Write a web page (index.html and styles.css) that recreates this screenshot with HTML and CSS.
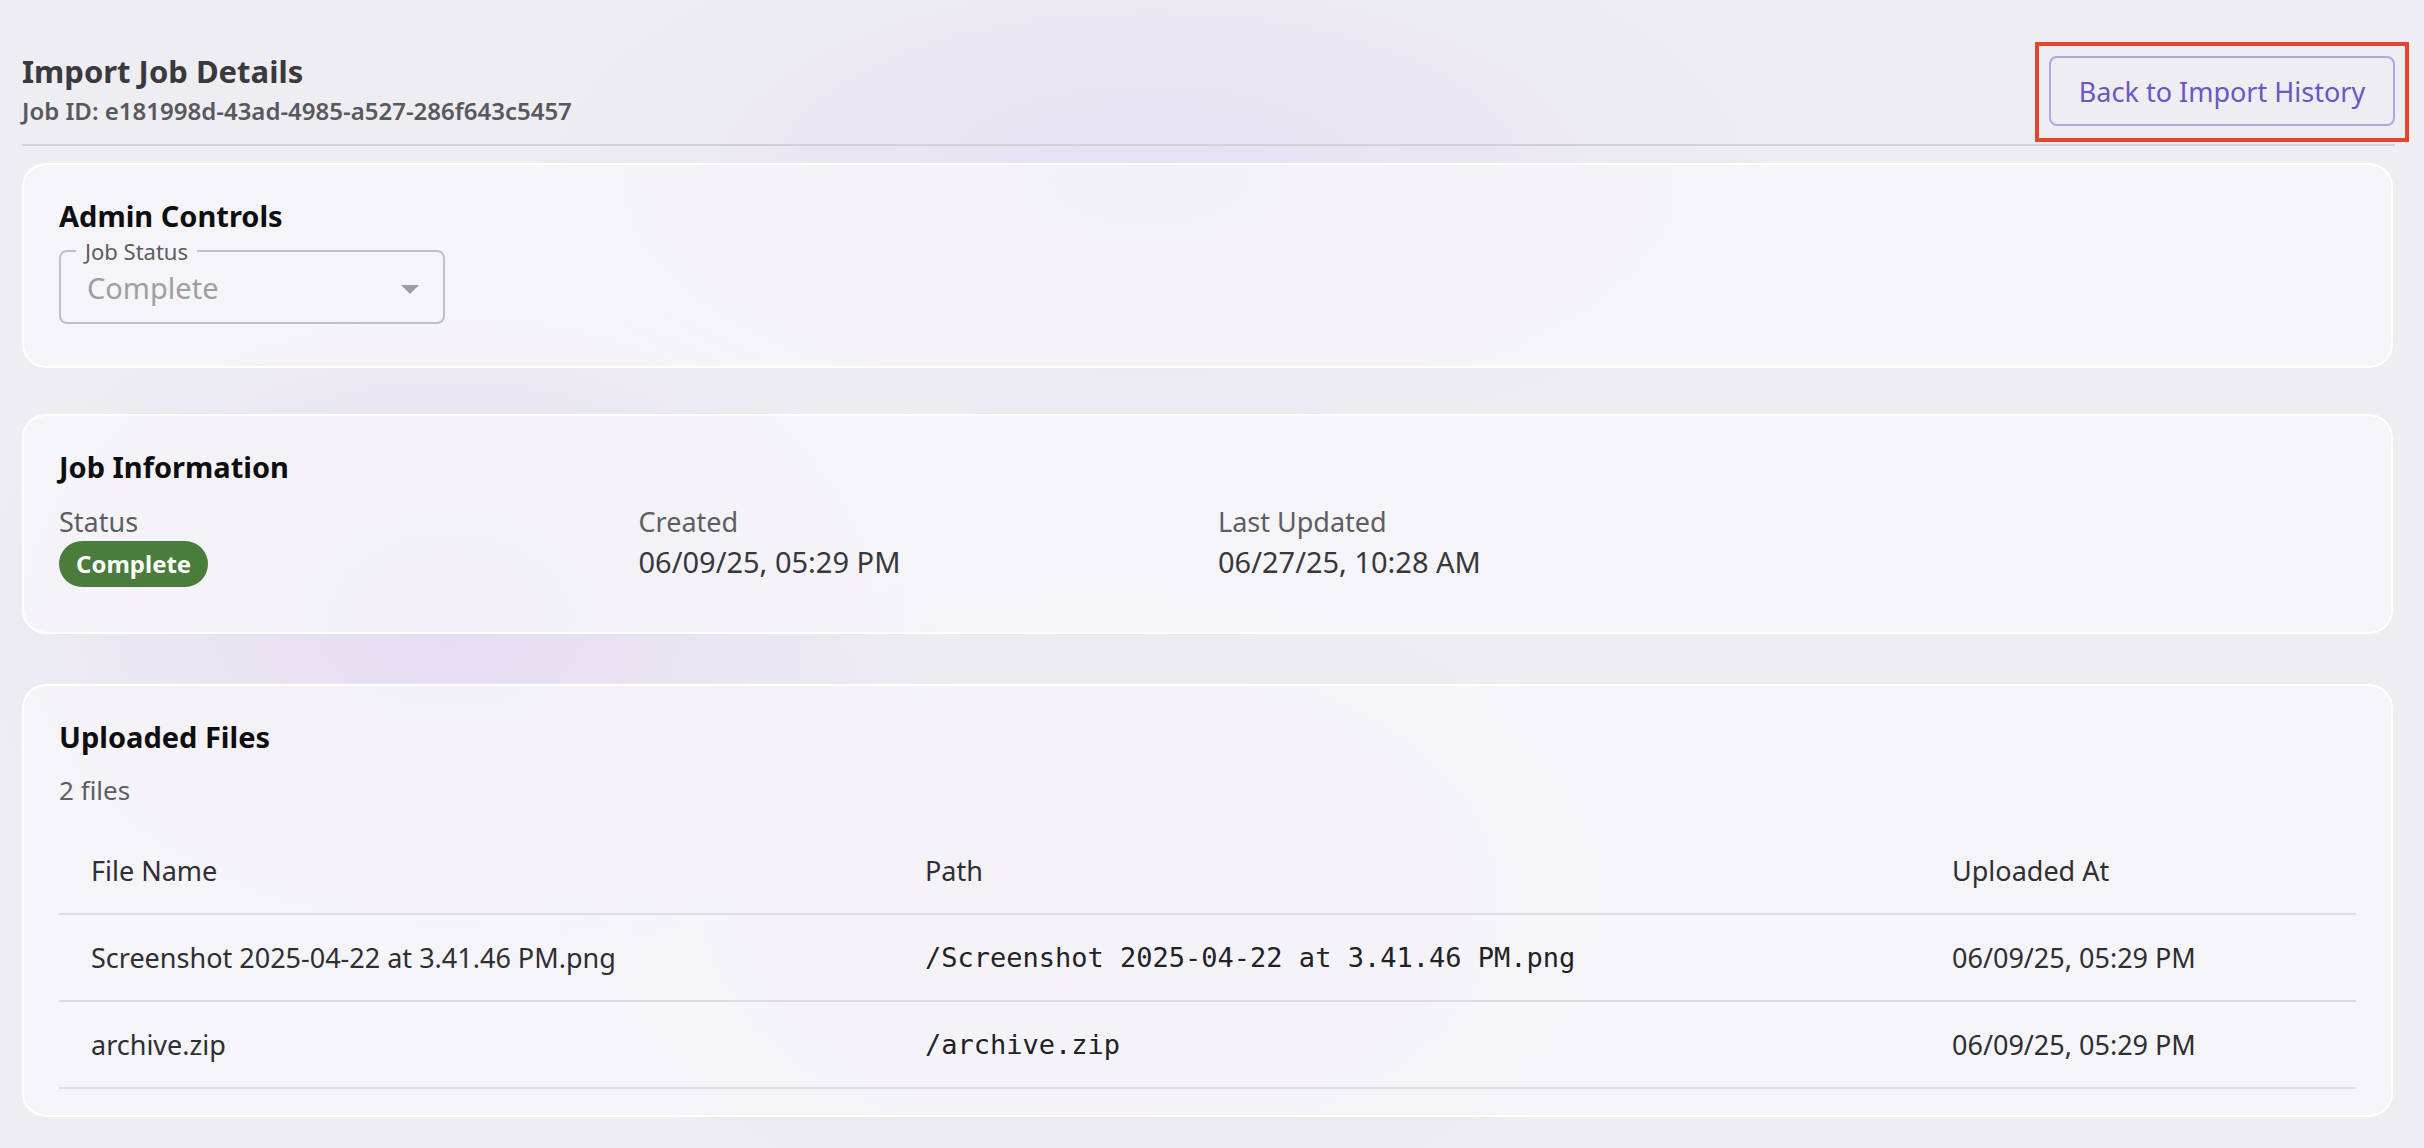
FILE: index.html
```html
<!DOCTYPE html>
<html lang="en">
<head>
<meta charset="utf-8">
<title>Import Job Details</title>
<link rel="stylesheet" href="styles.css">
</head>
<body>
<div class="page">
  <header class="page-header">
    <div class="title-block">
      <h1 class="title">Import Job Details</h1>
      <div class="job-id">Job ID: e181998d-43ad-4985-a527-286f643c5457</div>
    </div>
    <div class="btn-wrap">
      <button class="back-btn" type="button">Back to Import History</button>
      <span class="highlight"></span>
    </div>
  </header>

  <section class="card card-admin">
    <h2 class="card-title">Admin Controls</h2>
    <fieldset class="select">
      <legend class="select-label">Job Status</legend>
      <div class="select-value">
        <span>Complete</span>
        <svg class="caret" width="18" height="9" viewBox="0 0 18 9"><path d="M0 0 L18 0 L9 9 Z" fill="#9d9ca2"/></svg>
      </div>
    </fieldset>
  </section>

  <section class="card card-info">
    <h2 class="card-title">Job Information</h2>
    <div class="info-grid">
      <div class="info-item">
        <div class="info-label">Status</div>
        <span class="badge">Complete</span>
      </div>
      <div class="info-item">
        <div class="info-label">Created</div>
        <div class="info-value">06/09/25, 05:29 PM</div>
      </div>
      <div class="info-item">
        <div class="info-label">Last Updated</div>
        <div class="info-value">06/27/25, 10:28 AM</div>
      </div>
      <div class="info-item"></div>
    </div>
  </section>

  <section class="card card-files">
    <h2 class="card-title">Uploaded Files</h2>
    <div class="file-count">2 files</div>
    <table class="files">
      <colgroup>
        <col class="c1"><col class="c2"><col class="c3">
      </colgroup>
      <thead>
        <tr><th>File Name</th><th>Path</th><th>Uploaded At</th></tr>
      </thead>
      <tbody>
        <tr>
          <td>Screenshot 2025-04-22 at 3.41.46 PM.png</td>
          <td class="mono">/Screenshot 2025-04-22 at 3.41.46 PM.png</td>
          <td>06/09/25, 05:29 PM</td>
        </tr>
        <tr>
          <td>archive.zip</td>
          <td class="mono">/archive.zip</td>
          <td>06/09/25, 05:29 PM</td>
        </tr>
      </tbody>
    </table>
  </section>
</div>
</body>
</html>
```

FILE: styles.css
```css
* { box-sizing: border-box; }

html, body {
  margin: 0;
  padding: 0;
  height: 100%;
}

body {
  font-family: "Noto Sans", "Open Sans", sans-serif;
  color: #333238;
  background:
    radial-gradient(ellipse 700px 500px at 450px 620px, rgba(226, 214, 242, 0.75), rgba(226, 214, 242, 0) 70%),
    radial-gradient(ellipse 900px 400px at 1150px 180px, rgba(228, 220, 242, 0.8), rgba(228, 220, 242, 0) 70%),
    radial-gradient(ellipse 800px 500px at 1100px 900px, rgba(232, 224, 240, 0.6), rgba(232, 224, 240, 0) 70%),
    #eeedf2;
  overflow: hidden;
}

.page {
  padding: 0 29px 0 22px;
}

.page-header {
  display: flex;
  justify-content: space-between;
  align-items: flex-end;
  padding: 51px 0 18px;
  border-bottom: 2px solid #d2d0d8;
}

.title {
  margin: 0;
  font-size: 31px;
  line-height: 40px;
  font-weight: 700;
  color: #3a393e;
}

.job-id {
  font-size: 24px;
  line-height: 30px;
  font-weight: 600;
  color: #59585e;
  margin-top: 5px;
}

.btn-wrap {
  position: relative;
}

.back-btn {
  display: block;
  width: 346px;
  height: 70px;
  padding: 0;
  font-family: "Noto Sans", "Open Sans", sans-serif;
  font-size: 27px;
  color: #6a56c7;
  background: transparent;
  border: 2px solid #b0a6e4;
  border-radius: 8px;
}

.highlight {
  position: absolute;
  left: -14px;
  right: -14px;
  top: -14px;
  bottom: -16px;
  border: 4px solid #e8432c;
  pointer-events: none;
}

.card {
  background: rgba(248, 247, 250, 0.72);
  border: 2px solid rgba(255, 255, 255, 0.9);
  border-radius: 24px;
  margin-top: 17px;
  margin-right: 2px;
  padding: 35px 35px 42px;
}

.card-info {
  margin-top: 46px;
  padding-bottom: 45px;
}

.card-files {
  margin-top: 50px;
  padding-bottom: 26px;
}

.card-title {
  margin: 0;
  font-size: 29px;
  line-height: 32px;
  font-weight: 700;
  color: #0e0e10;
}

.select {
  margin: 6px 0 0;
  width: 386px;
  padding: 4px 24px 14px 15px;
  border: 2px solid #c0bec6;
  border-radius: 8px;
  min-width: 0;
}

.select-label {
  padding: 0 9px;
  font-size: 22px;
  line-height: 26px;
  color: #5c5b62;
}

.select-value {
  display: flex;
  justify-content: space-between;
  align-items: center;
  padding-left: 11px;
  font-size: 29px;
  line-height: 40px;
  color: #9e9da3;
}

.caret {
  display: block;
  margin-top: 2px;
}

.info-grid {
  display: grid;
  grid-template-columns: repeat(4, 1fr);
  column-gap: 21px;
  margin-top: 21px;
}

.info-label {
  font-size: 27px;
  line-height: 36px;
  color: #5e5d64;
}

.info-value {
  font-size: 29px;
  line-height: 40px;
  color: #38373c;
  margin-top: 2px;
}

.badge {
  display: inline-block;
  margin-top: 1px;
  height: 46px;
  line-height: 46px;
  padding: 0 17px;
  border-radius: 23px;
  background: #4a7c3b;
  color: #ffffff;
  font-size: 24px;
  font-weight: 700;
}

.file-count {
  margin-top: 19px;
  font-size: 26px;
  line-height: 36px;
  color: #5e5d64;
}

.files {
  margin-top: 19px;
  width: 100%;
  border-collapse: collapse;
  table-layout: fixed;
}

.files col.c1 { width: 834px; }
.files col.c2 { width: 1027px; }
.files col.c3 { width: auto; }

.files th,
.files td {
  text-align: left;
  padding: 0 0 0 32px;
  height: 87px;
  font-size: 27px;
  font-weight: 400;
  color: #2f2e33;
  border-bottom: 2px solid #dedce2;
  white-space: nowrap;
}

.files td.mono {
  font-family: "DejaVu Sans Mono", "Liberation Mono", monospace;
  font-size: 27px;
  color: #222126;
}
```
